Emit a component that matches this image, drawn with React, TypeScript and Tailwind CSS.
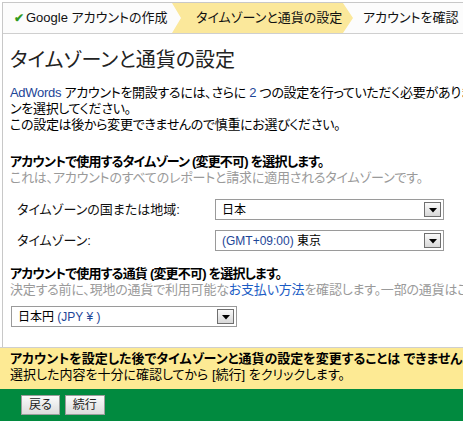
const font = "font-['Liberation_Sans','Noto_Sans_CJK_JP',sans-serif] [font-feature-settings:'palt']";

const Arrow = () => (
	<div className="absolute right-[2px] top-[2px] w-[17px] h-[15px] border border-[#6f6f6f] bg-gradient-to-b from-[#fafafa] to-[#d8d8d8] flex items-center justify-center">
		<svg width="8" height="5" viewBox="0 0 8 5" className="mt-[2px]">
			<polygon points="0,0 8,0 4,4.5" fill="#000" />
		</svg>
	</div>
);

const Select = ({ children, className }: { children: React.ReactNode; className: string }) => (
	<div className={`relative h-[21px] border border-[#9a9a9a] bg-white flex items-center pl-[6px] text-[12px] text-black ${className}`}>
		<span className="whitespace-nowrap">{children}</span>
		<Arrow />
	</div>
);

const App = () => {
	return (
		<div className={`w-[463px] h-[423px] overflow-hidden bg-white text-[13px] text-[#111] ${font}`}>
			<div className="mt-[2px] ml-[2px] h-[345px] border-l border-t border-[#c8c8c8] overflow-hidden">
				{/* steps */}
				<div className="h-[31px] border-b border-[#cfcfcf] flex items-stretch bg-[#fcfcfc] whitespace-nowrap">
					<div className="w-[169px] shrink-0 flex items-center pl-[11px]">
						<span className="text-[#2f9a22] text-[12px] font-bold mr-[2px]">✔</span>
						<span>Google アカウントの作成</span>
					</div>
					<div className="w-[181px] shrink-0 flex items-center pl-[24px] bg-[#fbe89b] [clip-path:polygon(0_0,calc(100%-10px)_0,100%_50%,calc(100%-10px)_100%,0_100%,9px_50%)]">
						タイムゾーンと通貨の設定
					</div>
					<div className="flex items-center pl-[10px]">アカウントを確認</div>
				</div>

				<div className="pl-[7px]">
					<h1 className="mt-[14px] text-[20px] leading-[24px] font-normal text-[#222]">タイムゾーンと通貨の設定</h1>

					<div className="mt-[13px] leading-[16px] whitespace-nowrap tracking-[-0.3px] text-black">
						<div>
							<span className="text-[#1d4597]">AdWords</span> アカウントを開設するには、さらに <span className="text-[#1d4597]">2</span> つの設定を行っていただく必要があります。
						</div>
						<div>ンを選択してください。</div>
						<div>この設定は後から変更できませんので慎重にお選びください。</div>
					</div>

					<div className="mt-[21px] leading-[16px] whitespace-nowrap">
						<div className="font-bold text-black tracking-[-0.8px]">アカウントで使用するタイムゾーン (変更不可) を選択します。</div>
						<div className="text-[#9a9a9a] tracking-[-0.2px]">これは、アカウントのすべてのレポートと請求に適用されるタイムゾーンです。</div>
					</div>

					<div className="mt-[13px] flex flex-col gap-[10px]">
						<div className="flex items-center">
							<div className="w-[205px] shrink-0 pl-[7px] whitespace-nowrap">タイムゾーンの国または地域:</div>
							<Select className="w-[229px]">日本</Select>
						</div>
						<div className="flex items-center">
							<div className="w-[205px] shrink-0 pl-[7px] whitespace-nowrap">タイムゾーン:</div>
							<Select className="w-[229px]">
								<span className="text-[#1d4597]">(GMT+09:00)</span> 東京
							</Select>
						</div>
					</div>

					<div className="mt-[15px] leading-[16px] whitespace-nowrap">
						<div className="font-bold text-black tracking-[-0.8px]">アカウントで使用する通貨 (変更不可) を選択します。</div>
						<div className="text-[#9a9a9a] tracking-[-0.2px]">
							決定する前に、現地の通貨で利用可能な<span className="text-[#1a5bc4]">お支払い方法</span>を確認します。一部の通貨はご利用いただけません。
						</div>
					</div>

					<Select className="mt-[8px] ml-[1px] w-[226px]">
						日本円 <span className="text-[#1d4597]">(JPY ¥ )</span>
					</Select>
				</div>
			</div>

			<div className="h-[42px] border-t border-[#cfcfcf] bg-[#fdea94] pl-[10px] pt-[3px] leading-[16px] whitespace-nowrap">
				<div className="font-bold text-black">アカウントを設定した後でタイムゾーンと通貨の設定を変更することは できません。</div>
				<div className="text-black">選択した内容を十分に確認してから [続行] をクリックします。</div>
			</div>

			<div className="h-[32px] bg-[#018a3f] flex items-center gap-[5px] pl-[21px]">
				<button className="h-[20px] px-[7px] border border-[#9c9c9c] bg-gradient-to-b from-[#fbfbfb] to-[#dcdcdc] text-[12px] text-[#222] leading-none">戻る</button>
				<button className="h-[20px] px-[7px] border border-[#9c9c9c] bg-gradient-to-b from-[#fbfbfb] to-[#dcdcdc] text-[12px] text-[#222] leading-none">続行</button>
			</div>
		</div>
	);
};

export default App;
